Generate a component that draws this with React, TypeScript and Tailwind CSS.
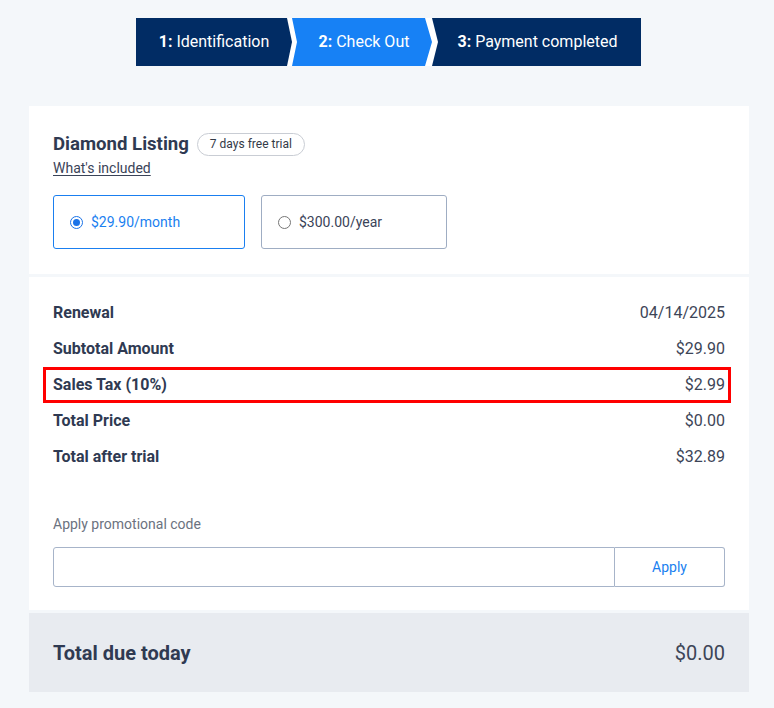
import React from "react";

const font = { fontFamily: "Roboto, 'Liberation Sans', sans-serif" };

function Row({ label, value, highlight }: { label: string; value: string; highlight?: boolean }) {
  return (
    <div className="relative flex h-9 items-center justify-between">
      {highlight && (
        <div className="pointer-events-none absolute -left-[10px] -right-[6px] top-0 bottom-0 border-[3px] border-[#ff0000]" />
      )}
      <span className="text-[16px] font-bold text-[#2f3a52]">{label}</span>
      <span className="text-[16px] text-[#3d4557]">{value}</span>
    </div>
  );
}

export default function App() {
  return (
    <div style={font} className="min-h-[708px] w-[774px] bg-[#f4f7fa] pt-[18px] pb-4">
      {/* Stepper */}
      <div className="ml-[136px] flex h-12 w-[505px] bg-white text-[16px] text-white">
        <div className="flex w-[156px] shrink-0 items-center justify-center bg-[#012c64] [clip-path:polygon(0_0,calc(100%-5px)_0,100%_50%,calc(100%-5px)_100%,0_100%)]">
          <span><b className="font-bold">1:</b> Identification</span>
        </div>
        <div className="flex w-[140px] shrink-0 items-center justify-center bg-[#1781f5] pl-[4px] [clip-path:polygon(0_0,calc(100%-7px)_0,100%_50%,calc(100%-7px)_100%,0_100%,5px_50%)]">
          <span><b className="font-bold">2:</b> Check Out</span>
        </div>
        <div className="flex w-[209px] shrink-0 items-center justify-center bg-[#012c64] pl-[2px] [clip-path:polygon(0_0,100%_0,100%_100%,0_100%,6px_50%)]">
          <span><b className="font-bold">3:</b> Payment completed</span>
        </div>
      </div>

      {/* Card */}
      <div className="ml-[29px] mt-10 flex w-[720px] flex-col gap-[3px]">
        {/* Section 1 */}
        <div className="h-[168px] bg-white px-6 pt-[25px]">
          <div className="flex items-center gap-2">
            <h2 className="text-[18.6px] font-bold leading-[26px] text-[#2f3a52]">Diamond Listing</h2>
            <span className="flex h-[23px] items-center rounded-full border border-[#c9cdd4] px-3 text-[12px] text-[#333a47]">
              7 days free trial
            </span>
          </div>
          <a className="mt-[1px] block w-fit text-[14px] leading-[20px] text-[#3a4358] underline underline-offset-2">
            What's included
          </a>
          <div className="mt-[17px] flex gap-4">
            <div className="flex h-[54px] w-[192px] items-center gap-2 rounded-[3px] border border-[#1a7ff0] pl-4">
              <span className="flex h-[13px] w-[13px] items-center justify-center rounded-full border-[1.5px] border-[#1a73e8]">
                <span className="h-[7px] w-[7px] rounded-full bg-[#1a73e8]" />
              </span>
              <span className="text-[14px] text-[#1a7ff0]">$29.90/month</span>
            </div>
            <div className="flex h-[54px] w-[186px] items-center gap-2 rounded-[3px] border border-[#9fadc3] pl-4">
              <span className="h-[13px] w-[13px] rounded-full border border-[#767676]" />
              <span className="text-[14px] text-[#3a4358]">$300.00/year</span>
            </div>
          </div>
        </div>

        {/* Section 2 */}
        <div className="bg-white px-6 pt-[18px] pb-[23px]">
          <Row label="Renewal" value="04/14/2025" />
          <Row label="Subtotal Amount" value="$29.90" />
          <Row label="Sales Tax (10%)" value="$2.99" highlight />
          <Row label="Total Price" value="$0.00" />
          <Row label="Total after trial" value="$32.89" />

          <div className="mt-[39px] text-[14px] leading-[20px] text-[#6b7280]">Apply promotional code</div>
          <div className="mt-[13px] flex h-[40px]">
            <input className="h-full min-w-0 flex-1 rounded-l-[3px] border border-[#a7b4c9] bg-white outline-none" />
            <button className="h-full w-[110px] rounded-r-[3px] border border-l-0 border-[#a7b4c9] bg-white text-[14px] text-[#1a7ff0]">
              Apply
            </button>
          </div>
        </div>

        {/* Section 3 */}
        <div className="flex h-[79px] items-center justify-between bg-[#e8ebf0] px-6">
          <span className="text-[20px] font-bold text-[#2f3a52]">Total due today</span>
          <span className="text-[20px] text-[#3d4557]">$0.00</span>
        </div>
      </div>
    </div>
  );
}
